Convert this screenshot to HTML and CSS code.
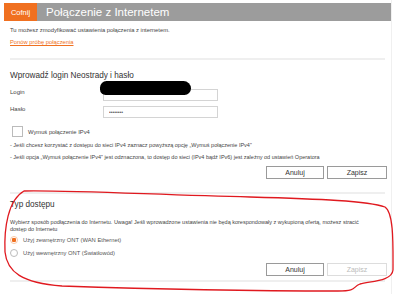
FILE: index.html
```html
<!DOCTYPE html>
<html lang="pl">
<head>
    <meta charset="UTF-8">
    <title>Połączenie z Internetem</title>
    <link rel="stylesheet" href="styles.css">
</head>
<body>
    <div class="page">
        <div class="header">
            <a class="back-button">Cofnij</a>
            <h1 class="header-title">Połączenie z Internetem</h1>
        </div>

        <div class="intro">
            <p class="intro-text">Tu możesz zmodyfikować ustawienia połączenia z internetem.</p>
            <a class="retry-link">Ponów próbę połączenia</a>
        </div>

        <div class="separator"></div>

        <div class="section">
            <h2 class="section-title">Wprowadź login Neostrady i hasło</h2>
            <div class="form-row">
                <label class="form-label">Login</label>
                <div class="input-wrap">
                    <input class="text-input" type="text" value="">
                    <span class="redaction"></span>
                </div>
            </div>
            <div class="form-row">
                <label class="form-label">Hasło</label>
                <div class="input-wrap">
                    <input class="text-input" type="password" value="12345678">
                </div>
            </div>
            <label class="check-row">
                <span class="checkbox"></span>
                Wymuś połączenie IPv4
            </label>
            <p class="note">- Jeśli chcesz korzystać z dostępu do sieci IPv4 zaznacz powyższą opcję „Wymuś połączenie IPv4”</p>
            <p class="note">- Jeśli opcja „Wymuś połączenie IPv4” jest odznaczona, to dostęp do sieci (IPv4 bądź IPv6) jest zależny od ustawień Operatora</p>
            <div class="button-row">
                <button class="btn">Anuluj</button>
                <button class="btn">Zapisz</button>
            </div>
        </div>

        <div class="separator"></div>

        <div class="section section-access">
            <h2 class="section-title">Typ dostępu</h2>
            <p class="section-text">Wybierz sposób podłączenia do Internetu. Uwaga! Jeśli wprowadzone ustawienia nie będą korespondowały z wykupioną ofertą, możesz stracić dostęp do Internetu</p>
            <label class="radio-row">
                <span class="radio radio-checked"></span>
                Użyj zewnętrzny ONT (WAN Ethernet)
            </label>
            <label class="radio-row">
                <span class="radio"></span>
                Użyj wewnętrzny ONT (Światłowód)
            </label>
            <div class="button-row button-row-low">
                <button class="btn">Anuluj</button>
                <button class="btn btn-disabled">Zapisz</button>
            </div>
        </div>

        <div class="separator separator-last"></div>
    </div>

    <svg class="scribble" viewBox="0 0 400 294" xmlns="http://www.w3.org/2000/svg">
        <path d="M 24 191 C 70 190, 160 195, 250 197 C 320 199, 368 201, 385 207 C 394 213, 393 245, 393 270 C 392 281, 372 281, 360 284 C 352 287, 358 291, 338 291 C 250 291, 150 289, 62 286 C 22 283, 7 272, 5 252 C 4 228, 8 200, 24 191 Z"
              fill="none" stroke="#e0191f" stroke-width="1.3" stroke-linejoin="round"/>
    </svg>
</body>
</html>
```

FILE: styles.css
```css
body {
    margin: 0;
    font-family: 'Liberation Sans', Arial, sans-serif;
    background: #fff;
    color: #444;
    position: relative;
    overflow: hidden;
}

.page {
    width: 387px;
    margin-left: 4px;
    padding-top: 3px;
    height: 291px;
    border-right: 1px solid #f0f0f0;
}

.header {
    display: flex;
    height: 18px;
}

.back-button {
    background: #f07020;
    color: #fff;
    font-size: 7.5px;
    width: 33px;
    display: flex;
    align-items: center;
    justify-content: center;
}

.header-title {
    flex: 1;
    margin: 0;
    background: #9c9c9c;
    color: #fff;
    font-size: 11.5px;
    font-weight: 400;
    padding-left: 9px;
    line-height: 18px;
}

.intro {
    padding: 6px 0 0 6px;
}

.intro-text {
    margin: 0;
    font-size: 5.8px;
    color: #444;
}

.retry-link {
    display: block;
    margin-top: 6px;
    font-size: 5.8px;
    color: #f07020;
    text-decoration: underline;
}

.separator {
    margin: 13px 0 0 6px;
    width: 375px;
    height: 2px;
    background: #efefef;
}

.section {
    padding: 0 0 0 6px;
    position: relative;
}

.section-title {
    margin: 11px 0 3px;
    font-size: 8.2px;
    font-weight: 400;
    color: #333;
}

.form-row {
    display: flex;
    align-items: center;
    height: 17px;
}

.form-label {
    width: 93px;
    font-size: 6px;
    color: #444;
}

.input-wrap {
    position: relative;
}

.text-input {
    box-sizing: border-box;
    width: 115px;
    height: 12px;
    border: 1px solid #d4d4d4;
    padding: 0 5px;
    font-size: 5px;
    color: #555;
    font-family: inherit;
    margin: 0;
}

.redaction {
    position: absolute;
    left: -3px;
    top: -2px;
    width: 91px;
    height: 14px;
    border-radius: 7px 8px 7px 6px;
    background: #000;
}

.check-row {
    display: flex;
    align-items: center;
    gap: 5px;
    margin: 9px 0 0 2px;
    font-size: 5.8px;
    color: #444;
}

.checkbox {
    width: 9px;
    height: 9px;
    border: 1px solid #bbb;
    background: #fff;
}

.note {
    margin: 5px 0 0;
    font-size: 5.5px;
    color: #444;
}

.note + .note {
    margin-top: 6px;
}

.button-row {
    display: flex;
    justify-content: flex-end;
    gap: 3px;
    margin: 6px 4px 0 0;
}

.btn {
    box-sizing: border-box;
    width: 58px;
    height: 13px;
    border: 1px solid #9a9a9a;
    background: #fff;
    font-family: inherit;
    font-size: 7px;
    color: #333;
    padding: 0;
}

.btn + .btn {
    width: 60px;
}

.btn-disabled {
    border-color: #ddd;
    color: #bbb;
}

.section-access .section-title {
    margin-top: 6px;
    margin-bottom: 10px;
}

.section-text {
    margin: 0;
    width: 362px;
    font-size: 5.5px;
    line-height: 7px;
    color: #444;
}

.radio-row {
    display: flex;
    align-items: center;
    gap: 5px;
    margin-top: 3px;
    font-size: 5.8px;
    color: #555;
}

.radio-row + .radio-row {
    margin-top: 5px;
}

.radio {
    box-sizing: border-box;
    width: 8px;
    height: 8px;
    border: 1px solid #bbb;
    border-radius: 50%;
    background: #fff;
}

.radio-checked {
    border-color: #f9c7a5;
    background: radial-gradient(circle, #f07020 0 2px, #fff 2.5px);
}

.button-row-low {
    margin-top: 6px;
}

.separator-last {
    margin-top: 4px;
}

.scribble {
    position: absolute;
    left: 0;
    top: 0;
    width: 400px;
    height: 294px;
    pointer-events: none;
}
```
